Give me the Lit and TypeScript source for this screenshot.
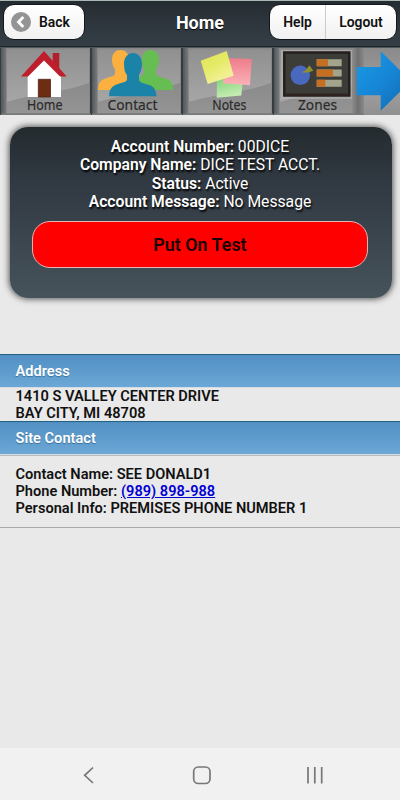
import { LitElement, html, css, svg } from "lit";
import { customElement } from "lit/decorators.js";

const homeIcon = svg`
  <path d="M27.7 28 44 11 61 28V50H27.7z" fill="#fff"/>
  <path d="M52.7 6h6.6v16h-6.6z" fill="#b3202c"/>
  <path d="M44 4 66.7 29.5H60L44 13.5 28 29.5H21z" fill="#bd1f2d"/>
  <path d="M38.3 32.3h12.2V50H38.3z" fill="#6c2d12" stroke="#4f2514" stroke-width=".8"/>`;

const contactIcon = svg`
  <path d="M21 13C21 6 25 3 29.500 3S38 6 38 13c0 5-2 7-3 9v4c3 4 9 5 13 8v9H7c0-8 3-10 9-12 6-2 8-2 8-5v-4c-2-2-3-5-3-9z" fill="#fbb040"/>
  <path d="M51 13c0-7 4-10 8.500-10S68 6 68 13c0 5-2 7-3 9v4c0 3 3 4 8 5 7 2 9 4 9 12H42v-9c4-3 9-4 11-8v-4c-1-2-2-4-2-9z" fill="#66bd52"/>
  <path d="M33 17c0-7 4-11 9-11s9 4 9 11c0 5-2 9-3 11v4c0 3 3 4 7 5 7 2 10 4 10.500 12.300H18C18 42 21 39 27 37c6-2 9-2 9-5v-4c-2-2-3-6-3-11z" fill="#1c83a8"/>`;

const notesIcon = svg`
  <defs>
    <linearGradient id="y" x2=".6" y2="1"><stop stop-color="#e2df58"/><stop offset=".5" stop-color="#e5eb67"/><stop offset="1" stop-color="#f6f0a0"/></linearGradient>
    <linearGradient id="p" x2="0" y2="1"><stop stop-color="#ee7c8a"/><stop offset="1" stop-color="#fbb2b6"/></linearGradient>
    <linearGradient id="g" x2=".3" y2="1"><stop stop-color="#80d276"/><stop offset="1" stop-color="#c6edb4"/></linearGradient>
  </defs>
  <path d="M35 31 60.700 35 59.300 48.500 34.700 50.700z" fill="url(#g)"/>
  <path d="M44 11 69.700 12 68 38.300 41 36.300z" fill="url(#p)"/>
  <path d="M18.700 13.700 44.700 4 51.700 28.700 25.700 37z" fill="url(#y)"/>`;

const zonesIcon = svg`
  <path d="M8 3h71v49H8z" fill="#b5b5b5" opacity=".6"/>
  <path d="M11.300 5.500h65v43H11.300z" fill="#3c3c39" stroke="#241f1d" stroke-width="2.500"/>
  <path d="M12 47.500h64" stroke="#302421" stroke-width="2"/>
  <circle cx="27.300" cy="28.300" r="9.700" fill="#4869bd"/>
  <path d="M28.500 25.500 33 23 36.300 18.300 40.300 23.700 35 25.500z" fill="#938f2b"/>
  <path d="M43.700 12.300h25v7h-25zM43.700 22.500h25v7h-25zM43.700 32.700h25v7h-25z" fill="#a4a48d"/>
  <path d="M43.700 12.300h11.300v7h-11.300zM43.700 22.500h16.300v7h-16.300zM43.700 32.700h8.600v7h-8.600z" fill="#c66f20"/>`;

const tiles = [
  { label: "Home", x: 27, w: 35.5, last: false, icon: homeIcon },
  { label: "Contact", x: 16.5, w: 50, last: false, icon: contactIcon },
  { label: "Notes", x: 30.3, w: 34, last: false, icon: notesIcon },
  { label: "Zones", x: 25, w: 39, last: true, icon: zonesIcon },
];

@customElement("nav-tile")
class NavTile extends LitElement {
  static properties = { tile: { attribute: false } };
  declare tile: (typeof tiles)[number];
  static styles = css`
    :host { display: block; flex: 0 0 91px; height: 68px; }
    svg { display: block; }
    text { font: 14.5px "Noto Sans", sans-serif; fill: #2b2b2b; stroke: #2b2b2b; stroke-width: .2px; }
  `;
  render() {
    const t = this.tile;
    return html`<svg width="91" height="68" viewBox="0 0 91 68">
      <defs>
        <linearGradient id="shine" x2="0" y2="1"><stop stop-color="#909090"/><stop offset="1" stop-color="#a6a6a6"/></linearGradient>
        <linearGradient id="shade" x2="0" y2="1"><stop stop-color="#8a8a8a"/><stop offset="1" stop-color="#949494"/></linearGradient>
        <linearGradient id="edge"><stop stop-color="#50575a"/><stop offset="1" stop-color="#7d7f80"/></linearGradient>
        <linearGradient id="gap"><stop stop-color="#8d8d8d"/><stop offset=".5" stop-color="#6f6f6f"/><stop offset="1" stop-color="#8a8a8a"/></linearGradient>
      </defs>
      <rect width="91" height="68" fill="#343c40"/>
      <rect x="1" width="6" height="68" fill="url(#edge)"/>
      <rect x="6" y="1" width="84" height="67" fill="#878787"/>
      <path d="M7 55C32 47 62 46 89 36V66H7z" fill="url(#shade)"/>
      <path d="M7 2.500h82V36C62 46 32 47 7 55z" fill="url(#shine)"/>
      ${t.last ? svg`<rect x="79" y="1" width="12" height="67" fill="url(#gap)"/>` : ""}
      <path d="M1 67.300h90" stroke="#77797a" stroke-width="1.400"/>
      <path d="M0 .5h91" stroke="#50585b"/>
      ${t.icon}
      <text x=${t.x} y="62.700" textLength=${t.w} lengthAdjust="spacingAndGlyphs">${t.label}</text>
    </svg>`;
  }
}

@customElement("app-root")
class AppRoot extends LitElement {
  static styles = css`
    :host { display: flex; flex-direction: column; width: 400px; height: 800px; overflow: hidden; background: #e9e9e9; font-family: Roboto, sans-serif; color: #111; }
    * { box-sizing: border-box; }
    header { height: 47px; flex: none; display: grid; grid-template-columns: 130px 1fr 130px; align-items: start; padding: 3px 3px 0; background: linear-gradient(#252c31, #30383f 60%, #343e45); border-top: 1px solid #a9bab6; border-bottom: 1px solid #1c2429; }
    .btn { display: flex; align-items: center; height: 36px; border-radius: 11px; border: 1px solid #11171b; background: linear-gradient(#fff, #f1f1f1); font-weight: 600; font-size: 13.9px; }
    .back { width: 82px; padding-left: 7px; gap: 8px; }
    .pair { width: 128px; justify-self: end; }
    .pair span { flex: 1; text-align: center; line-height: 35px; }
    .pair span:first-child { flex: 0 0 56px; align-self: stretch; border-right: 1px solid #c9cdcf; }
    h1 { margin: 0; font-size: 18px; line-height: 37px; text-align: center; color: #fff; text-shadow: 0 1px 1px #000; }
    nav { position: relative; display: flex; height: 68px; flex: none; width: 400px; overflow: hidden; background: linear-gradient(#50585b 1px, #8a8a8a 1px, #a0a0a0 60%, #909090); }
    .arrow { position: absolute; right: 0; top: 0; }
    .card { flex: none; margin: 12px 8px 0 10px; height: 171px; border-radius: 18px; background: linear-gradient(#242b2f, #303841 30%, #46535b); box-shadow: 0 0 6px 1px rgba(0, 0, 0, .65); padding: 11px 24px 0 22px; text-align: center; color: #fff; font-size: 15.7px; line-height: 18.4px; text-shadow: 1px 2px 2px #000; }
    .card b { font-weight: 600; }
    .line { white-space: nowrap; }
    .test { height: 47px; margin-top: 9px; border: 1px solid #e3b7b7; border-radius: 18px; background: #f00; color: #1b0000; font-weight: 600; font-size: 17.9px; line-height: 45px; text-shadow: none; }
    .band { flex: none; height: 34px; padding-left: 15.5px; line-height: 32px; font-size: 14.6px; font-weight: 600; color: #fff; background: linear-gradient(#528fc3, #6ba8d7); border-top: 1px solid #246080; border-bottom: 1px solid #d5dde2; text-shadow: 0 1px 1px #3b7198; }
    .first { margin-top: 56px; }
    .address { height: 33px; flex: none; padding-left: 15.5px; font-weight: 600; font-size: 14.6px; line-height: 17px; }
    .contact { height: 73px; flex: none; padding: 10px 0 0 15.5px; border-bottom: 1px solid #aaa; border-top: 1px solid #b8bcbe; font-weight: 600; font-size: 14.6px; line-height: 17.2px; }
    .link { color: #0000d4; text-decoration: underline; }
    footer { margin-top: auto; height: 52px; flex: none; background: #f1f1f1; }
    footer svg, .arrow, .back svg { display: block; }
  `;
  render() {
    return html`
      <header>
        <div class="btn back">
          <svg width="20" height="20" viewBox="0 0 20 20"><circle cx="10" cy="10" r="10" fill="#949494"/><path d="M12.300 5 7.500 10l4.800 5" fill="none" stroke="#fff" stroke-width="2.800"/></svg>
          <span>Back</span>
        </div>
        <h1>Home</h1>
        <div class="btn pair"><span>Help</span><span>Logout</span></div>
      </header>
      <nav>
        ${tiles.map((t) => html`<nav-tile .tile=${t}></nav-tile>`)}
        <svg class="arrow" width="46" height="68" viewBox="-2 0 46 68">
          <defs><linearGradient id="a" x2="1" y2="1"><stop stop-color="#1a9be6"/><stop offset=".5" stop-color="#1685d6"/><stop offset="1" stop-color="#1268ad"/></linearGradient></defs>
          <path d="M.700 20H24.700V4.300L55 34 24.700 63.700V48.300H.700z" fill="url(#a)"/>
        </svg>
      </nav>
      <section class="card">
        <div class="line"><b>Account Number:</b> 00DICE</div>
        <div class="line"><b>Company Name:</b> DICE TEST ACCT.</div>
        <div class="line"><b>Status:</b> Active</div>
        <div class="line"><b>Account Message:</b> No Message</div>
        <div class="test">Put On Test</div>
      </section>
      <div class="band first">Address</div>
      <div class="address">1410 S VALLEY CENTER DRIVE<br>BAY CITY, MI 48708</div>
      <div class="band">Site Contact</div>
      <div class="contact">Contact Name: SEE DONALD1<br>Phone Number: <span class="link">(989) 898-988</span><br>Personal Info: PREMISES PHONE NUMBER 1</div>
      <footer>
        <svg width="400" height="52" viewBox="0 0 400 52" fill="none" stroke="#777" stroke-width="1.700">
          <path d="M93 19.500 84.700 27.300 93 35"/>
          <rect x="193.700" y="19" width="16.300" height="16.500" rx="4.500"/>
          <path d="M308 19v16.500M314.800 19v16.500M321.700 19v16.500"/>
        </svg>
      </footer>`;
  }
}
